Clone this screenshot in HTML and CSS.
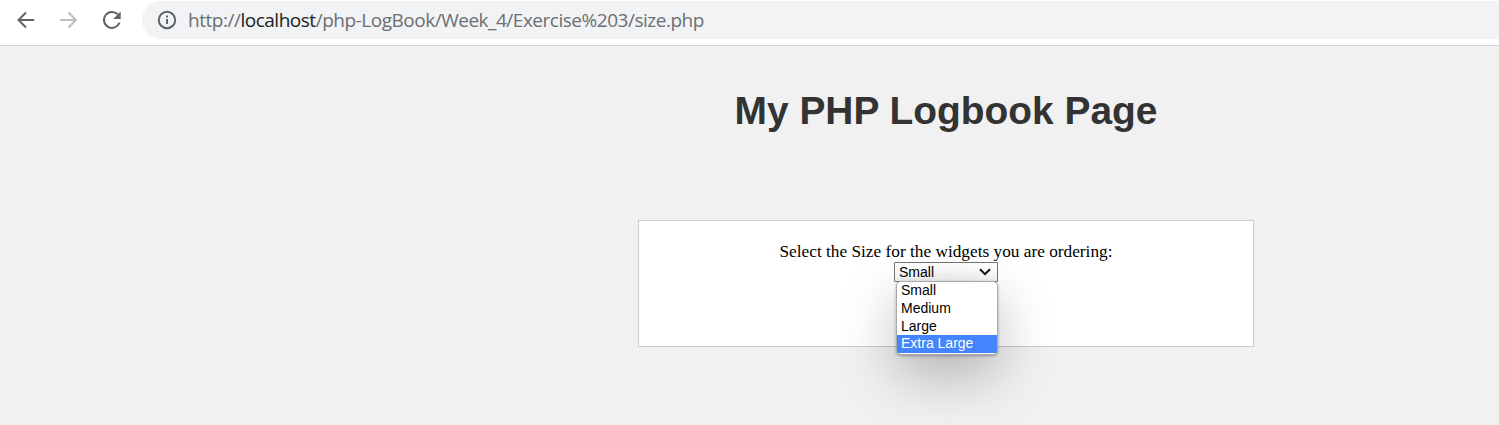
FILE: index.html
```html
<!DOCTYPE html>
<html lang="en">
<head>
<meta charset="utf-8">
<title>My PHP Logbook Page</title>
<link rel="stylesheet" href="styles.css">
</head>
<body>
<header class="toolbar">
  <svg class="icon" viewBox="0 0 20 20"><path d="M18.200 10H2M10 2.500L2.500 10l7.500 7.500" /></svg>
  <svg class="icon icon-disabled" viewBox="0 0 20 20"><path d="M1.300 10H17M9.500 2.500L17 10l-7.500 7.500" /></svg>
  <svg class="icon" viewBox="0 0 20 20"><path d="M15.800 4.400A8 8 0 1 0 17.500 12.700" /><path class="solid" d="M18.700 1.500V9H11.200Z" /></svg>
  <div class="address">
    <svg class="info" viewBox="0 0 20 20"><circle cx="10" cy="10" r="8.200" /><path d="M10 9v5M10 5.500v2" /></svg>
    <span class="url">http://<span class="host">localhost</span>/php-LogBook/Week_4/Exercise%203/size.php</span>
  </div>
</header>
<main class="page">
  <h1 class="title">My PHP Logbook Page</h1>
  <section class="panel">
    <div class="question">Select the Size for the widgets you are ordering:</div>
    <div class="select">
      <span>Small</span>
      <svg class="chevron" viewBox="0 0 12 8"><path d="M1 1.200l5 5 5-5" /></svg>
      <ul class="menu">
        <li>Small</li>
        <li>Medium</li>
        <li>Large</li>
        <li class="active">Extra Large</li>
      </ul>
    </div>
  </section>
</main>
</body>
</html>
```
FILE: styles.css
```css
* { box-sizing: border-box; }
body {
  margin: 0;
  height: 425px;
  overflow: hidden;
  background: #f1f1f1;
}
.toolbar {
  display: flex;
  height: 46px;
  padding: 0 0 5px 16px;
  align-items: center;
  background: #fff;
  border-bottom: 1px solid #d3d4d5;
}
.icon {
  width: 20px;
  height: 20px;
  margin-right: 23px;
  fill: none;
  stroke: #5f6368;
  stroke-width: 2;
}
.icon-disabled { stroke: #bdbdbd; }
.icon .solid { fill: #5f6368; stroke: none; }
.address {
  flex: 1;
  display: flex;
  align-items: center;
  height: 38px;
  margin-left: -3px;
  padding-left: 15px;
  background: #f1f3f4;
  border-radius: 19px 0 0 19px;
}
.info {
  width: 20px;
  height: 20px;
  margin-right: 11px;
  fill: none;
  stroke: #5f6368;
  stroke-width: 2;
}
.url {
  font: 19px/26px "Open Sans", sans-serif;
  letter-spacing: -0.480px;
  color: #6b6e72;
  white-space: nowrap;
}
.host { color: #202124; }
.page {
  padding: 42px 0 0 393px;
  display: flex;
  flex-direction: column;
  align-items: center;
}
.title {
  margin: 0;
  font: bold 38.900px/46px "Liberation Sans", Arial, sans-serif;
  color: #333;
}
.panel {
  width: 616px;
  height: 127px;
  margin-top: 86px;
  padding-top: 21px;
  display: flex;
  flex-direction: column;
  align-items: center;
  background: #fff;
  border: 1px solid #ccc;
}
.question {
  font: 17.300px/20px "Liberation Serif", "Times New Roman", serif;
  color: #000;
}
.select {
  position: relative;
  width: 104px;
  height: 20px;
  padding: 0 6px 0 4px;
  display: flex;
  align-items: center;
  justify-content: space-between;
  background: linear-gradient(#fff 30%, #f3f3f3);
  border: 1px solid #767676;
  border-radius: 1px;
  font: 14px/18px "Liberation Sans", Arial, sans-serif;
  color: #000;
}
.chevron {
  width: 12px;
  height: 8px;
  fill: none;
  stroke: #111;
  stroke-width: 2;
}
.menu {
  position: absolute;
  top: 18px;
  left: 1px;
  width: 102px;
  height: 74px;
  margin: 0;
  padding: 0;
  list-style: none;
  overflow: hidden;
  background: #fff;
  border: 1px solid #aaa;
  border-radius: 5px;
  box-shadow: 0 20px 56px rgba(0, 0, 0, 0.27), 0 1px 3px rgba(0, 0, 0, 0.3);
}
.menu li {
  height: 17.800px;
  padding-left: 4px;
  line-height: 17.800px;
}
.menu .active {
  color: #fff;
  background: #4285ff;
}
```
